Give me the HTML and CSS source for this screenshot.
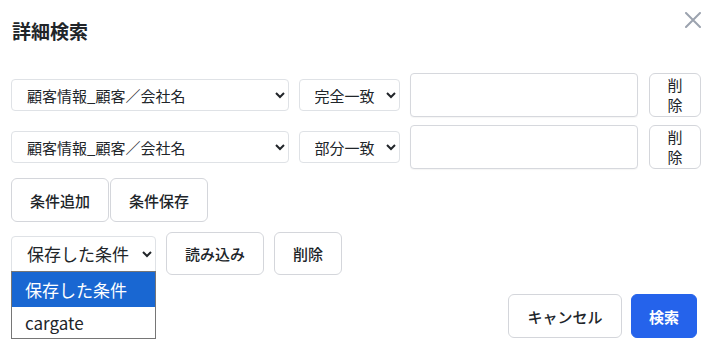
FILE: index.html
```html
<!DOCTYPE html>
<html lang="ja">

<head>
    <meta charset="UTF-8">
    <meta name="viewport" content="width=device-width, initial-scale=1.0">
    <title>詳細検索</title>
    <link rel="stylesheet" href="styles.css">
</head>

<body>

    <div class="modal">
        <div class="modal-header">
            <h2 class="modal-title">詳細検索</h2>
            <button class="close-btn" aria-label="閉じる">
                <svg width="16" height="16" viewBox="0 0 16 16">
                    <path d="M1 1 L15 15 M15 1 L1 15" stroke="#9ca3af" stroke-width="2" stroke-linecap="round" />
                </svg>
            </button>
        </div>

        <div class="conditions">
            <div class="condition-row">
                <select class="field-select">
                    <option>顧客情報_顧客／会社名</option>
                </select>
                <select class="match-select">
                    <option>完全一致</option>
                    <option>部分一致</option>
                </select>
                <input class="value-input" type="text">
                <button class="btn remove-btn">削除</button>
            </div>
            <div class="condition-row">
                <select class="field-select">
                    <option>顧客情報_顧客／会社名</option>
                </select>
                <select class="match-select">
                    <option>部分一致</option>
                    <option>完全一致</option>
                </select>
                <input class="value-input" type="text">
                <button class="btn remove-btn">削除</button>
            </div>
        </div>

        <div class="btn-group">
            <button class="btn">条件追加</button>
            <button class="btn">条件保存</button>
        </div>

        <div class="saved-row">
            <div class="saved-wrap">
                <select class="saved-select">
                    <option>保存した条件</option>
                    <option>cargate</option>
                </select>
                <ul class="saved-menu">
                    <li class="active">保存した条件</li>
                    <li>cargate</li>
                </ul>
            </div>
            <button class="btn saved-btn">読み込み</button>
            <button class="btn saved-btn">削除</button>
        </div>

        <div class="modal-footer">
            <button class="btn cancel-btn">キャンセル</button>
            <button class="btn primary-btn">検索</button>
        </div>
    </div>

</body>

</html>
```

FILE: styles.css
```css
* {
    margin: 0;
    padding: 0;
    box-sizing: border-box;
    font-family: "Noto Sans CJK JP", "Noto Sans", sans-serif;
}

body {
    background-color: #ffffff;
    color: #212529;
}

.modal {
    width: 713px;
    height: 353px;
    padding: 0 12px 0 11px;
}

.modal-header {
    display: flex;
    justify-content: space-between;
    align-items: flex-start;
    height: 73px;
}

.modal-title {
    font-size: 19px;
    font-weight: 700;
    line-height: 27px;
    margin-top: 17px;
    margin-left: 1px;
}

.close-btn {
    border: none;
    background: none;
    width: 16px;
    height: 16px;
    margin-top: 12px;
    margin-right: 0;
    display: flex;
}

.conditions {
    display: flex;
    flex-direction: column;
    gap: 8px;
}

.condition-row {
    display: flex;
    align-items: center;
    gap: 10px;
}

select {
    height: 32px;
    font-size: 15px;
    color: #212529;
    background-color: #ffffff;
    border: 1px solid #dfe2e6;
    border-radius: 4px;
    padding: 0 6px 0 11px;
}

.field-select {
    width: 278px;
}

.match-select {
    width: 102px;
}

.value-input {
    width: 228px;
    height: 44px;
    border: 1px solid #d6d8dd;
    border-radius: 4px;
    box-shadow: 0 1px 1px rgba(0, 0, 0, 0.04);
}

.btn {
    height: 44px;
    font-size: 15px;
    font-weight: 500;
    color: #212529;
    background-color: #ffffff;
    border: 1px solid #d4d6db;
    border-radius: 6px;
    padding: 0 18px;
    white-space: nowrap;
}

.remove-btn {
    width: 52px;
    padding: 0 12px;
    line-height: 20px;
    font-weight: 400;
    margin-left: 1px;
    white-space: normal;
}

.btn-group {
    display: flex;
    gap: 1px;
    margin-top: 9px;
}

.btn-group .btn {
    width: 98px;
    height: 44px;
}

.saved-row {
    display: flex;
    align-items: center;
    gap: 10px;
    margin-top: 10px;
}

.saved-wrap {
    position: relative;
}

.saved-select {
    width: 145px;
    height: 36px;
    font-size: 17px;
    padding: 0 4px 0 11px;
    border-radius: 4px 4px 0 0;
}

.saved-menu {
    position: absolute;
    top: 35px;
    left: 0;
    width: 145px;
    list-style: none;
    background-color: #ffffff;
    border: 1px solid #767676;
    font-size: 17px;
}

.saved-menu li {
    height: 31px;
    line-height: 31px;
    padding-left: 13px;
}

.saved-menu li.active {
    height: 35px;
    line-height: 35px;
    background-color: #1967d2;
    color: #ffffff;
}

.saved-btn {
    height: 43px;
}

.saved-btn:first-of-type {
    width: 98px;
}

.modal-footer {
    display: flex;
    justify-content: flex-end;
    gap: 9px;
    margin-top: 19px;
    padding-right: 4px;
}

.cancel-btn {
    width: 114px;
}

.primary-btn {
    width: 66px;
    padding: 0;
    background-color: #2563eb;
    border-color: #2563eb;
    color: #ffffff;
    font-weight: 700;
}
```
